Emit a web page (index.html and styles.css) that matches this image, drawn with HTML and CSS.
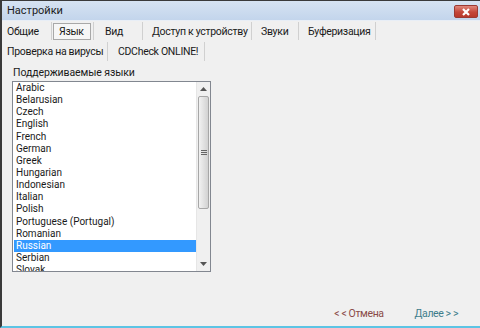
FILE: index.html
```html
<!DOCTYPE html>
<html>
<head>
<meta charset="utf-8">
<link rel="stylesheet" href="styles.css">
</head>
<body>
<div class="window">
  <div class="titlebar">
    <span class="title">Настройки</span>
    <span class="close"><svg width="10" height="8" viewBox="0 0 10 8"><path d="M2 1 L8 7 M8 1 L2 7" stroke="#fff" stroke-width="2.2"/></svg></span>
  </div>
  <div class="tabs row1">
    <div class="tab t-general">Общие</div>
    <div class="tab t-lang"><span class="sel">Язык</span></div>
    <div class="tab t-view">Вид</div>
    <div class="tab t-access">Доступ к устройству</div>
    <div class="tab t-sound">Звуки</div>
    <div class="tab t-buf">Буферизация</div>
  </div>
  <div class="tabs row2">
    <div class="tab t-virus">Проверка на вирусы</div>
    <div class="tab t-online">CDCheck ONLINE!</div>
  </div>
  <div class="content">
    <div class="label">Поддерживаемые языки</div>
    <div class="listbox">
      <ul class="items">
        <li>Arabic</li>
        <li>Belarusian</li>
        <li>Czech</li>
        <li>English</li>
        <li>French</li>
        <li>German</li>
        <li>Greek</li>
        <li>Hungarian</li>
        <li>Indonesian</li>
        <li>Italian</li>
        <li>Polish</li>
        <li>Portuguese (Portugal)</li>
        <li>Romanian</li>
        <li class="selected">Russian</li>
        <li>Serbian</li>
        <li>Slovak</li>
      </ul>
      <div class="scrollbar">
        <div class="arrow up"><svg width="7" height="4" viewBox="0 0 7 4"><path d="M0 4 L3.5 0 L7 4 Z" fill="#555"/></svg></div>
        <div class="track">
          <div class="thumb"><span class="grip"></span></div>
        </div>
        <div class="arrow down"><svg width="7" height="4" viewBox="0 0 7 4"><path d="M0 0 L3.5 4 L7 0 Z" fill="#555"/></svg></div>
      </div>
    </div>
  </div>
  <div class="footer">
    <span class="btn cancel">&lt; &lt; Отмена</span>
    <span class="btn next">Далее &gt; &gt;</span>
  </div>
</div>
</body>
</html>
```

FILE: styles.css
```css
html, body {
  margin: 0;
  padding: 0;
}
body {
  width: 480px;
  height: 328px;
  overflow: hidden;
  background: #f0f0f0;
  font-family: Roboto, "Noto Sans", sans-serif;
  font-size: 10.5px;
  color: #1a1a1a;
}
.window {
  box-sizing: border-box;
  width: 480px;
  height: 328px;
  border-top: 1px solid #3a3a3a;
  border-left: 2px solid #3a3a3a;
  border-bottom: 2px solid #5cc4e4;
  display: flex;
  flex-direction: column;
  background: #f0f0f0;
}
.titlebar {
  height: 19px;
  flex: none;
  background: linear-gradient(#d6e3f2, #c3d5ec);
  display: flex;
  align-items: center;
  justify-content: space-between;
  padding: 0 2px 0 5px;
  border-bottom: 1px solid #e8eef6;
}
.title {
  color: #1b1b1b;
  line-height: 19px;
  font-size: 11px;
}
.close {
  width: 24px;
  height: 13px;
  margin-top: 2px;
  border: 1px solid #9b3a33;
  border-radius: 2px;
  background: linear-gradient(#e0887c, #c4473a 55%, #b8392c);
  display: flex;
  align-items: center;
  justify-content: center;
  box-sizing: border-box;
}
.tabs {
  display: flex;
  flex: none;
  height: 20px;
  align-items: stretch;
  letter-spacing: -0.3px;
}
.row2 {
  height: 21px;
}
.tab {
  box-sizing: border-box;
  border-right: 1px solid #d0d0d0;
  padding-left: 9px;
  line-height: 20px;
  white-space: nowrap;
  margin: 1px 0 1px;
}
.t-general { width: 50px; padding-left: 5px; }
.t-lang { width: 42px; padding-left: 1px; display: flex; align-items: center; }
.t-view { width: 49px; padding-left: 11px; }
.t-access { width: 109px; padding-left: 9px; }
.t-sound { width: 47px; padding-left: 9px; }
.t-buf { width: 77px; padding-left: 9px; }
.t-virus { width: 106px; padding-left: 5px; }
.t-online { width: 97px; padding-left: 10px; }
.sel {
  display: block;
  box-sizing: border-box;
  width: 38px;
  height: 17px;
  line-height: 15px;
  border: 1px solid #a8a8a8;
  background: #f6f6f6;
  padding-left: 5px;
}
.content {
  padding: 4px 0 0 10px;
  flex: 1;
}
.label {
  line-height: 14px;
  padding-left: 1px;
  margin-bottom: 1px;
  letter-spacing: -0.1px;
}
.listbox {
  box-sizing: border-box;
  width: 199px;
  height: 191px;
  border: 1px solid #828790;
  background: #fff;
  display: flex;
  overflow: hidden;
}
.items {
  list-style: none;
  margin: 0;
  padding: 0 0 0 1px;
  flex: 1;
  overflow: hidden;
  font-size: 10px;
}
.items li {
  height: 12.15px;
  line-height: 12px;
  padding-left: 2px;
  white-space: nowrap;
}
.items li.selected {
  background: #3399ff;
  color: #fff;
}
.scrollbar {
  width: 13px;
  flex: none;
  background: #f0f0f0;
  display: flex;
  flex-direction: column;
  border-left: 1px solid #e6e6e6;
}
.arrow {
  height: 14px;
  display: flex;
  align-items: center;
  justify-content: center;
  flex: none;
}
.track {
  flex: 1;
}
.thumb {
  box-sizing: border-box;
  height: 113px;
  margin: 0 1px;
  border: 1px solid #a7a7a7;
  border-radius: 2px;
  background: linear-gradient(90deg, #f2f2f2, #e2e2e2 50%, #d2d2d2);
  display: flex;
  align-items: center;
  justify-content: center;
}
.grip {
  width: 6px;
  height: 5px;
  border-top: 1px solid #666;
  border-bottom: 1px solid #666;
  box-sizing: border-box;
  background: linear-gradient(#666, #666) center / 6px 1px no-repeat;
}
.footer {
  flex: none;
  height: 24px;
  display: flex;
  justify-content: flex-end;
  align-items: center;
  padding-right: 22px;
  gap: 31px;
  letter-spacing: -0.4px;
}
.btn {
  line-height: 14px;
}
.cancel {
  color: #8a4b47;
}
.next {
  color: #3e7d8c;
}
```
